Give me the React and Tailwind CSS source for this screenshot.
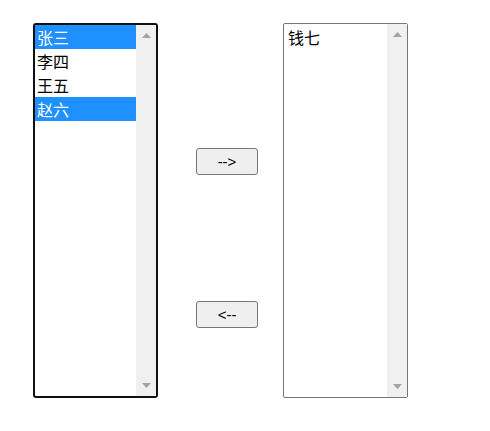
import { useState } from 'react';

const CJK = { fontFamily: '"Microsoft YaHei", "Noto Sans CJK SC", "Noto Sans", sans-serif' };

function ScrollTrack() {
  return (
    <div className="w-[20px] shrink-0 bg-[#f0f0f0] flex flex-col justify-between items-center pt-[8px] pb-[8px]">
      <svg width="9" height="5" viewBox="0 0 9 5">
        <polygon points="0,5 9,5 4.5,0" fill="#a3a3a3" />
      </svg>
      <svg width="9" height="5" viewBox="0 0 9 5">
        <polygon points="0,0 9,0 4.5,5" fill="#a3a3a3" />
      </svg>
    </div>
  );
}

function ListBox({ items, selected, focused }) {
  return (
    <div
      className={`w-[125px] h-[375px] flex bg-white ${
        focused ? 'border-2 border-[#101010] rounded-[3px]' : 'border border-[#767676] rounded-[2px]'
      }`}
    >
      <div className={`flex-1 flex flex-col ${focused ? '' : 'pt-px'}`}>
        {items.map((item) => (
          <div
            key={item}
            style={CJK}
            className={`h-[24px] leading-[24px] text-[16px] ${focused ? 'pl-[2px]' : 'pl-[4px]'} ${
              selected.includes(item) ? 'bg-[#1e90ff] text-white' : 'text-black'
            }`}
          >
            {item}
          </div>
        ))}
      </div>
      <ScrollTrack />
    </div>
  );
}

export default function App() {
  const [left] = useState(['张三', '李四', '王五', '赵六']);
  const [right] = useState(['钱七']);

  return (
    <div className="w-[490px] h-[431px] bg-white flex items-start pl-[33px] pt-[23px]">
      <ListBox items={left} selected={['张三', '赵六']} focused />

      {/* Move buttons */}
      <div className="flex flex-col ml-[38px] mr-[25px] pt-[125px] gap-[126px]">
        {['-->', '<--'].map((label) => (
          <button
            key={label}
            className="w-[62px] h-[27px] bg-[#efefef] border border-[#767676] rounded-[3px] text-[15px] leading-none text-black"
            style={{ fontFamily: 'Arial, "Liberation Sans", sans-serif' }}
          >
            {label}
          </button>
        ))}
      </div>

      <ListBox items={right} selected={[]} />
    </div>
  );
}
